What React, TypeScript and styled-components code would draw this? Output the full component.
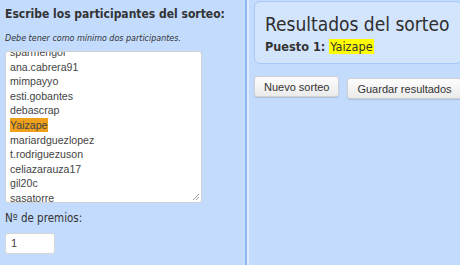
import styled, { createGlobalStyle } from "styled-components";

const Global = createGlobalStyle`
  html, body {
    margin: 0;
    padding: 0;
    background: #c3dbfd;
  }
`;

const Page = styled.div`
  display: flex;
  width: 460px;
  height: 265px;
  overflow: hidden;
  font-family: "DejaVu Sans Condensed", "DejaVu Sans", sans-serif;
  color: #333;
  white-space: nowrap;
`;

const LeftPanel = styled.div`
  width: 247px;
  flex: none;
  padding: 5px 0 0 5px;
  box-sizing: border-box;
  border-right: 2px solid #8fb8f5;
  box-shadow: 2px 0 0 #e0ecfd;
`;

const RightPanel = styled.div`
  flex: 1;
  padding: 0 3px 0 7px;
`;

const Heading = styled.h2`
  margin: 0;
  font-size: 12px;
  font-weight: bold;
  line-height: 18px;
`;

const Hint = styled.p`
  margin: 9px 0 7px;
  font-size: 8.9px;
  font-style: italic;
  line-height: 12px;
`;

const FakeTextArea = styled.div`
  position: relative;
  width: 197px;
  height: 152px;
  box-sizing: border-box;
  background: #fff;
  border: 1px solid #d2d2d2;
  border-radius: 3px;
  overflow: hidden;
  font-family: "Liberation Sans", Arial, sans-serif;
  font-size: 10.6px;
  color: #444;
`;

const Lines = styled.div`
  margin-top: -7px;
  padding-left: 4px;
`;

const Line = styled.div`
  height: 14.6px;
  line-height: 14.6px;
`;

const Selected = styled.span`
  background: #f0a11c;
  padding: 1px 0;
`;

const Grip = styled.svg`
  position: absolute;
  right: 1px;
  bottom: 1px;
`;

const Label = styled.div`
  margin-top: 8px;
  font-size: 11.5px;
  line-height: 14px;
`;

const NumberBox = styled.div`
  margin-top: 8px;
  width: 50px;
  height: 21px;
  box-sizing: border-box;
  background: #fff;
  border: 1px solid #d6d6d6;
  border-radius: 3px;
  padding-left: 5px;
  font-family: "Liberation Sans", Arial, sans-serif;
  font-size: 11px;
  line-height: 19px;
  color: #444;
`;

const Card = styled.div`
  margin-top: 1px;
  height: 63px;
  box-sizing: border-box;
  background: #d3e5fd;
  border: 1px solid #a8c8f7;
  border-radius: 6px;
  padding: 10px 0 0 10px;
`;

const CardTitle = styled.div`
  font-size: 19px;
  line-height: 24px;
  color: #2e2e2e;
`;

const Place = styled.div`
  margin-top: 3px;
  font-size: 12.6px;
  font-weight: bold;
  line-height: 15px;
`;

const Winner = styled.span`
  font-weight: normal;
  background: #ffff00;
  padding: 0 1px;
`;

const Buttons = styled.div`
  display: flex;
  align-items: flex-start;
  gap: 8px;
  margin-top: 12px;
`;

const Button = styled.button<{ $drop?: number }>`
  margin-top: ${(p) => p.$drop ?? 0}px;
  height: 21px;
  padding: 0 9px;
  font-family: "Liberation Sans", Arial, sans-serif;
  font-size: 11px;
  color: #333;
  white-space: nowrap;
  background: linear-gradient(#fdfdfd, #ebebeb);
  border: 1px solid #d0d0d0;
  border-radius: 3px;
  box-shadow: 0 1px 1px rgba(0, 0, 0, 0.12);
`;

const participants = [
  "sparmengol",
  "ana.cabrera91",
  "mimpayyo",
  "esti.gobantes",
  "debascrap",
  "Yaizape",
  "mariardguezlopez",
  "t.rodriguezuson",
  "celiazarauza17",
  "gil20c",
  "sasatorre",
];

export default function App() {
  return (
    <Page>
      <Global />
      <LeftPanel>
        <Heading>Escribe los participantes del sorteo:</Heading>
        <Hint>Debe tener como mínimo dos participantes.</Hint>
        <FakeTextArea>
          <Lines>
            {participants.map((p) => (
              <Line key={p}>{p === "Yaizape" ? <Selected>{p}</Selected> : p}</Line>
            ))}
          </Lines>
          <Grip width="8" height="8" viewBox="0 0 8 8">
            <path d="M7 1L1 7M7 4L4 7" stroke="#999" strokeWidth="1" />
          </Grip>
        </FakeTextArea>
        <Label>Nº de premios:</Label>
        <NumberBox>1</NumberBox>
      </LeftPanel>
      <RightPanel>
        <Card>
          <CardTitle>Resultados del sorteo</CardTitle>
          <Place>
            Puesto 1: <Winner>Yaizape</Winner>
          </Place>
        </Card>
        <Buttons>
          <Button>Nuevo sorteo</Button>
          <Button $drop={2}>Guardar resultados</Button>
        </Buttons>
      </RightPanel>
    </Page>
  );
}
